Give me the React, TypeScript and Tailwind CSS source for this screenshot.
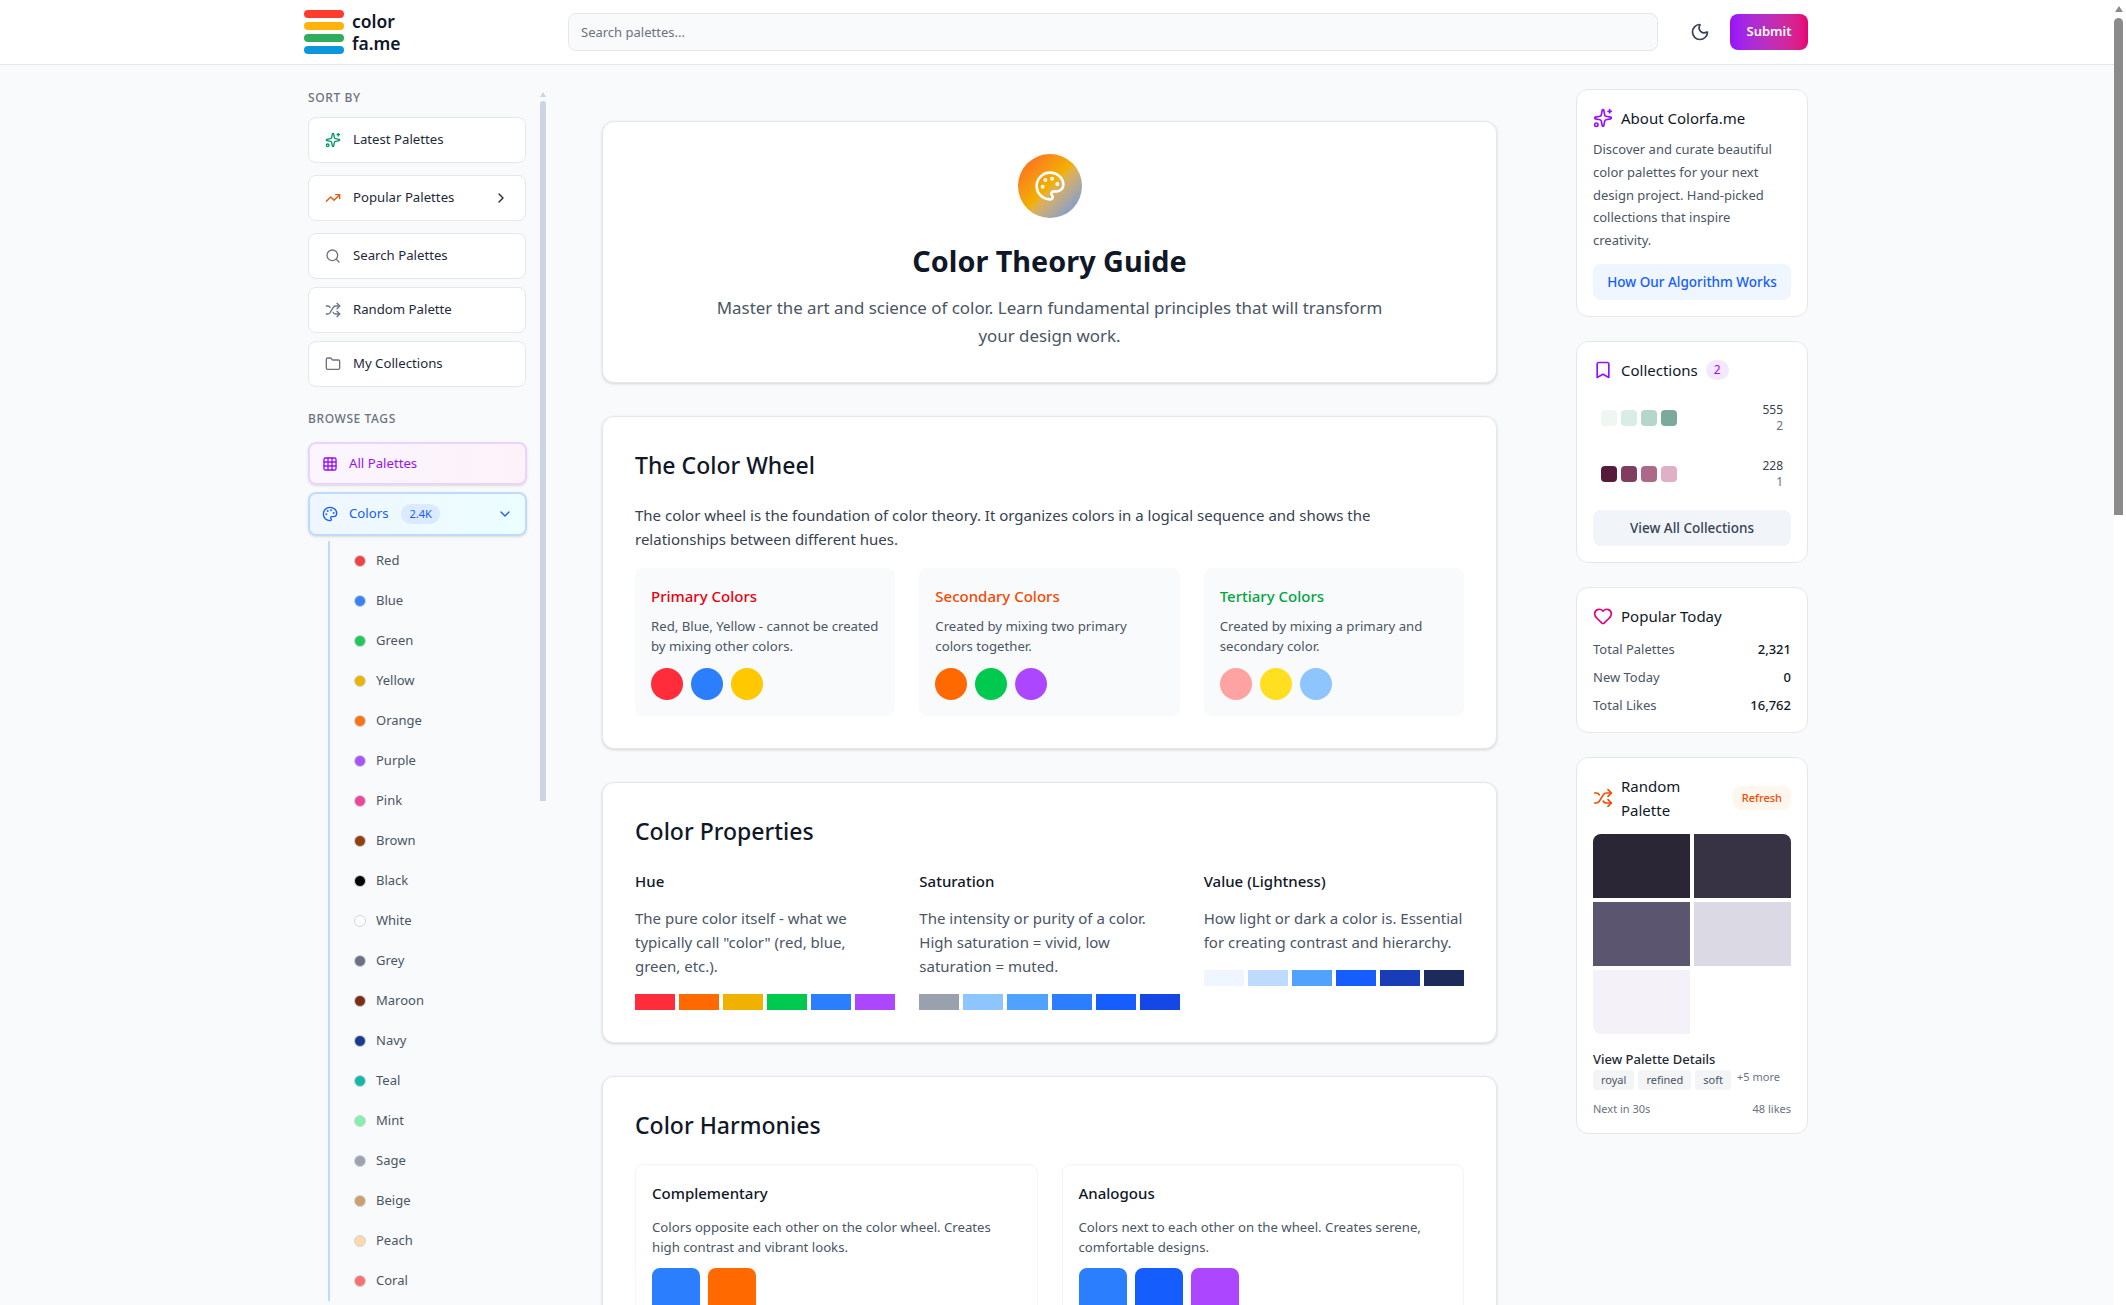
import {
  Bookmark,
  ChevronDown,
  ChevronRight,
  Folder,
  Grid3x3,
  Heart,
  Moon,
  Palette,
  Search,
  Shuffle,
  Sparkles,
  TrendingUp,
} from "lucide-react";

const TAG_COLORS = [
  { name: "Red", dot: "bg-[#ef4444]" },
  { name: "Blue", dot: "bg-[#3b82f6]" },
  { name: "Green", dot: "bg-[#22c55e]" },
  { name: "Yellow", dot: "bg-[#eab308]" },
  { name: "Orange", dot: "bg-[#f97316]" },
  { name: "Purple", dot: "bg-[#a855f7]" },
  { name: "Pink", dot: "bg-[#ec4899]" },
  { name: "Brown", dot: "bg-[#92400e]" },
  { name: "Black", dot: "bg-black" },
  { name: "White", dot: "bg-white" },
  { name: "Grey", dot: "bg-[#6b7280]" },
  { name: "Maroon", dot: "bg-[#7c2d12]" },
  { name: "Navy", dot: "bg-[#1e3a8a]" },
  { name: "Teal", dot: "bg-[#14b8a6]" },
  { name: "Mint", dot: "bg-[#86efac]" },
  { name: "Sage", dot: "bg-[#9ca3af]" },
  { name: "Beige", dot: "bg-[#c9a06f]" },
  { name: "Peach", dot: "bg-[#fed7aa]" },
  { name: "Coral", dot: "bg-[#f87171]" },
];

const WHEEL_CARDS = [
  {
    title: "Primary Colors",
    titleClass: "text-[#e7000b]",
    text: "Red, Blue, Yellow - cannot be created by mixing other colors.",
    dots: ["bg-[#ff2d3c]", "bg-[#2b7fff]", "bg-[#ffc800]"],
  },
  {
    title: "Secondary Colors",
    titleClass: "text-[#f54900]",
    text: "Created by mixing two primary colors together.",
    dots: ["bg-[#ff6900]", "bg-[#00c950]", "bg-[#ad46ff]"],
  },
  {
    title: "Tertiary Colors",
    titleClass: "text-[#00a63e]",
    text: "Created by mixing a primary and secondary color.",
    dots: ["bg-[#ffa2a2]", "bg-[#ffdf20]", "bg-[#8ec5ff]"],
  },
];

const PROPERTIES = [
  {
    title: "Hue",
    textClass: "pr-1",
    text: 'The pure color itself - what we typically call "color" (red, blue, green, etc.).',
    strip: ["bg-[#ff2d3c]", "bg-[#ff6900]", "bg-[#f0b100]", "bg-[#00c950]", "bg-[#2b7fff]", "bg-[#ad46ff]"],
  },
  {
    title: "Saturation",
    textClass: "",
    text: "The intensity or purity of a color. High saturation = vivid, low saturation = muted.",
    strip: ["bg-[#99a1af]", "bg-[#8ec5ff]", "bg-[#51a2ff]", "bg-[#2b7fff]", "bg-[#155dfc]", "bg-[#1447e6]"],
  },
  {
    title: "Value (Lightness)",
    textClass: "",
    text: "How light or dark a color is. Essential for creating contrast and hierarchy.",
    strip: ["bg-[#eff6ff]", "bg-[#bedbff]", "bg-[#51a2ff]", "bg-[#155dfc]", "bg-[#193cb8]", "bg-[#1c2a5c]"],
  },
];

const HARMONIES = [
  {
    title: "Complementary",
    text: "Colors opposite each other on the color wheel. Creates high contrast and vibrant looks.",
    swatches: ["bg-[#2b7fff]", "bg-[#ff6900]"],
  },
  {
    title: "Analogous",
    text: "Colors next to each other on the wheel. Creates serene, comfortable designs.",
    swatches: ["bg-[#2b7fff]", "bg-[#155dfc]", "bg-[#ad46ff]"],
  },
];

function SortButton({ icon, label, chevron, className }: { icon: React.ReactNode; label: string; chevron?: boolean; className: string }) {
  return (
    <button className={`flex h-[46px] w-[218px] items-center gap-3 rounded-lg border border-gray-200 bg-white pl-4 pr-4 text-[13.2px] font-[450] text-gray-800 ${className}`}>
      {icon}
      <span className="flex-1 text-left">{label}</span>
      {chevron && <ChevronRight size={16} className="text-gray-800" />}
    </button>
  );
}

function Sidebar() {
  return (
    <aside className="relative w-[256px] shrink-0 pt-[25px] pl-1">
      {/* fake scrollbar of the sticky sidebar */}
      <div className="absolute left-[236px] top-[27px] h-0 w-0 border-x-[3px] border-b-[5px] border-x-transparent border-b-[#cbd5e1]" />
      <div className="absolute left-[236px] top-[36px] h-[700px] w-[6px] rounded-t-full bg-[#cbd5e1]" />

      <h3 className="mb-[11px] text-xs font-medium leading-4 tracking-wider text-gray-500">SORT BY</h3>
      <SortButton className="mb-3" icon={<Sparkles size={16} className="text-[#059669]" />} label="Latest Palettes" />
      <SortButton className="mb-3" icon={<TrendingUp size={16} className="text-[#ea580c]" />} label="Popular Palettes" chevron />
      <SortButton className="mb-2" icon={<Search size={16} className="text-gray-500" />} label="Search Palettes" />
      <SortButton className="mb-2" icon={<Shuffle size={16} className="text-gray-500" />} label="Random Palette" />
      <SortButton className="mb-6" icon={<Folder size={16} className="text-gray-500" />} label="My Collections" />

      <h3 className="mb-[15px] text-xs font-medium leading-4 tracking-wider text-gray-500">BROWSE TAGS</h3>
      <button className="mb-[7px] flex h-[43px] w-[219px] items-center gap-[11px] rounded-lg border-2 border-[#e9d4ff] bg-gradient-to-r from-[#faf5ff] to-[#fdf2f8] pl-3 text-[13.2px] font-[450] text-[#9810fa] shadow-sm">
        <Grid3x3 size={16} />
        All Palettes
      </button>
      <button className="flex h-[44px] w-[219px] items-center gap-[11px] rounded-lg border-2 border-[#bedbff] bg-gradient-to-r from-[#eff6ff] to-[#ecfeff] pl-3 pr-3 text-[13.2px] font-[450] text-[#155dfc] shadow-sm">
        <Palette size={16} />
        Colors
        <span className="ml-0.5 rounded-full bg-[#dbeafe] px-2 text-[11px] leading-5">2.4K</span>
        <ChevronDown size={16} className="ml-auto" />
      </button>

      <ul className="ml-5 mt-[5px] border-l-2 border-[#bedbff] pl-6">
        {TAG_COLORS.map((c) => (
          <li key={c.name} className="flex h-10 items-center gap-[10px] text-[13px] text-gray-600">
            <span className={`h-3 w-3 rounded-full border border-gray-300 ${c.dot}`} />
            {c.name}
          </li>
        ))}
      </ul>
    </aside>
  );
}

function SectionCard({ title, children }: { title: string; children: React.ReactNode }) {
  return (
    <section className="rounded-xl border border-gray-200 bg-white p-8 shadow-[0_1px_3px_rgba(0,0,0,0.15)]">
      <h2 className="mb-[22px] text-[23px] font-medium leading-8 text-gray-900">{title}</h2>
      {children}
    </section>
  );
}

function GuideContent() {
  return (
    <main className="flex-1 pl-[42px] pr-[79px] pt-[56px]">
      <div className="flex flex-col gap-[33px]">
        <section className="rounded-xl border border-gray-200 bg-white p-8 text-center shadow-[0_1px_3px_rgba(0,0,0,0.15)]">
          <div className="mx-auto mb-[25px] flex h-16 w-16 items-center justify-center rounded-full bg-gradient-to-br from-[#ff5a1f] via-[#f0b100] to-[#5b8def]">
            <Palette size={32} className="text-white" />
          </div>
          <h1 className="mb-[15px] text-[28.8px] font-bold leading-9 text-gray-900">Color Theory Guide</h1>
          <p className="mx-auto max-w-2xl text-[16.9px] leading-7 text-gray-600">
            Master the art and science of color. Learn fundamental principles that will transform your design work.
          </p>
        </section>

        <SectionCard title="The Color Wheel">
          <p className="mb-[17px] text-[15px] leading-6 text-gray-700">
            The color wheel is the foundation of color theory. It organizes colors in a logical sequence and shows the relationships between different hues.
          </p>
          <div className="grid grid-cols-3 gap-6">
            {WHEEL_CARDS.map((card) => (
              <div key={card.title} className="rounded-lg bg-gray-50 p-4">
                <h3 className={`mb-2 text-[15px] font-medium leading-6 ${card.titleClass}`}>{card.title}</h3>
                <p className="mb-3 text-[13.2px] leading-5 text-gray-600">{card.text}</p>
                <div className="flex gap-2">
                  {card.dots.map((dot) => (
                    <span key={dot} className={`h-8 w-8 rounded-full ${dot}`} />
                  ))}
                </div>
              </div>
            ))}
          </div>
        </SectionCard>

        <SectionCard title="Color Properties">
          <div className="grid grid-cols-3 gap-6">
            {PROPERTIES.map((prop) => (
              <div key={prop.title}>
                <h3 className="mb-[13px] text-[15px] font-medium leading-6 text-gray-900">{prop.title}</h3>
                <p className={`mb-4 text-[15px] leading-6 text-gray-600 ${prop.textClass}`}>{prop.text}</p>
                <div className="flex gap-1">
                  {prop.strip.map((c) => (
                    <span key={c} className={`h-4 flex-1 ${c}`} />
                  ))}
                </div>
              </div>
            ))}
          </div>
        </SectionCard>

        <SectionCard title="Color Harmonies">
          <div className="grid grid-cols-2 gap-6 pt-px">
            {HARMONIES.map((h) => (
              <div key={h.title} className="rounded-lg border border-gray-100 p-4">
                <h3 className="mb-3 text-[15px] font-medium leading-6 text-gray-900">{h.title}</h3>
                <p className="mb-[11px] text-[13.2px] leading-5 text-gray-600">{h.text}</p>
                <div className="flex gap-2">
                  {h.swatches.map((s) => (
                    <span key={s} className={`h-12 w-12 rounded-lg ${s}`} />
                  ))}
                </div>
              </div>
            ))}
          </div>
        </SectionCard>
      </div>
    </main>
  );
}

function InfoCard({ children }: { children: React.ReactNode }) {
  return <div className="rounded-xl border border-gray-200 bg-white p-4">{children}</div>;
}

function RightRail() {
  return (
    <aside className="flex w-[232px] shrink-0 flex-col gap-6 pt-6">
      <InfoCard>
        <div className="mb-2 flex items-center gap-2">
          <Sparkles size={20} className="text-[#9810fa]" />
          <h3 className="text-[15px] font-[450] leading-6 text-gray-900">About Colorfa.me</h3>
        </div>
        <p className="mb-3 text-[13px] leading-[22.75px] text-gray-600">
          Discover and curate beautiful color palettes for your next design project. Hand-picked collections that inspire creativity.
        </p>
        <button className="h-9 w-full rounded-lg bg-[#eff6ff] text-[13.5px] font-medium text-[#155dfc]">How Our Algorithm Works</button>
      </InfoCard>

      <InfoCard>
        <div className="mb-3 flex items-center gap-2">
          <Bookmark size={20} className="text-[#9810fa]" />
          <h3 className="text-[15px] font-[450] leading-6 text-gray-900">Collections</h3>
          <span className="rounded-full bg-[#f3e8ff] px-2 text-xs leading-5 text-[#9810fa]">2</span>
        </div>
        <div className="mb-3 flex flex-col gap-2">
          <CollectionRow colors={["bg-[#eff7f3]", "bg-[#d8ede4]", "bg-[#b5d6cb]", "bg-[#7ba99b]"]} count="555" saved="2" />
          <CollectionRow colors={["bg-[#561a3a]", "bg-[#823c5f]", "bg-[#b0688a]", "bg-[#e0afc8]"]} count="228" saved="1" />
        </div>
        <button className="h-9 w-full rounded-lg bg-[#f1f5f9] text-[13.5px] font-medium text-gray-700">View All Collections</button>
      </InfoCard>

      <InfoCard>
        <div className="mb-3 flex items-center gap-2">
          <Heart size={20} className="text-[#e60076]" />
          <h3 className="text-[15px] font-[450] leading-6 text-gray-900">Popular Today</h3>
        </div>
        <div className="flex flex-col gap-2">
          {[
            ["Total Palettes", "2,321"],
            ["New Today", "0"],
            ["Total Likes", "16,762"],
          ].map(([label, value]) => (
            <div key={label} className="flex h-5 items-center justify-between text-[13px]">
              <span className="text-gray-600">{label}</span>
              <span className="font-medium text-gray-900">{value}</span>
            </div>
          ))}
        </div>
      </InfoCard>

      <InfoCard>
        <div className="mb-3 flex items-center gap-2">
          <Shuffle size={20} className="shrink-0 text-[#f54900]" />
          <h3 className="flex-1 text-[15px] font-[450] leading-6 text-gray-900">Random Palette</h3>
          <button className="h-6 rounded-lg bg-[#fff7ed] px-[9px] text-[11px] font-medium text-[#f54900]">Refresh</button>
        </div>
        <div className="mb-[15px] grid grid-cols-2 gap-1 overflow-hidden rounded-lg">
          <div className="h-16 bg-[#2a2636]" />
          <div className="h-16 bg-[#373244]" />
          <div className="h-16 bg-[#5c5570]" />
          <div className="h-16 bg-[#dbd9e3]" />
          <div className="h-16 bg-[#f5f1f8]" />
        </div>
        <p className="text-[13px] font-medium leading-5 text-gray-800">View Palette Details</p>
        <div className="mb-[11px] mt-px flex items-start gap-1 text-[11px]">
          {["royal", "refined", "soft"].map((tag) => (
            <span key={tag} className="rounded bg-gray-100 px-2 leading-5 text-gray-600">
              {tag}
            </span>
          ))}
          <span className="-mt-px pl-0.5 leading-4 text-gray-500">+5 more</span>
        </div>
        <div className="flex justify-between text-[11px] leading-4 text-gray-500">
          <span>Next in 30s</span>
          <span>48 likes</span>
        </div>
      </InfoCard>
    </aside>
  );
}

function CollectionRow({ colors, count, saved }: { colors: string[]; count: string; saved: string }) {
  return (
    <div className="flex items-center justify-between p-2">
      <div className="flex gap-1">
        {colors.map((c) => (
          <span key={c} className={`h-4 w-4 rounded ${c}`} />
        ))}
      </div>
      <div className="text-right text-xs leading-4">
        <div className="text-gray-700">{count}</div>
        <div className="text-gray-500">{saved}</div>
      </div>
    </div>
  );
}

export default function App() {
  return (
    <div className="flex h-screen overflow-hidden bg-white font-['Noto_Sans',sans-serif]">
      <div className="h-full min-w-0 flex-1 overflow-hidden bg-[#f9fafb]">
        <header className="h-[65px] border-b border-gray-200 bg-white pr-0.5">
          <div className="mx-auto flex h-full w-[1536px] items-center px-4">
            <div className="flex w-[264px] items-center gap-2">
              <div className="flex w-10 flex-col gap-1">
                <span className="h-2 rounded-full bg-[#ff3b30]" />
                <span className="h-2 rounded-full bg-[#ffb30a]" />
                <span className="h-2 rounded-full bg-[#2fac5c]" />
                <span className="h-2 rounded-full bg-[#0a97dc]" />
              </div>
              <div className="text-[17.5px] font-semibold leading-[22px] text-[#0f172a]">
                color
                <br />
                fa.me
              </div>
            </div>
            <input
              readOnly
              placeholder="Search palettes..."
              className="h-[38px] flex-1 rounded-lg border border-gray-200 bg-gray-50 px-3 text-[13px] placeholder:text-gray-500"
            />
            <Moon size={20} className="ml-8 text-gray-700" />
            <button className="ml-5 h-9 w-[78px] rounded-lg bg-gradient-to-r from-[#9810fa] to-[#e60076] text-[13px] font-semibold text-white">Submit</button>
          </div>
        </header>
        <div className="pr-0.5">
          <div className="mx-auto flex w-[1536px] px-4">
            <Sidebar />
            <GuideContent />
            <RightRail />
          </div>
        </div>
      </div>
      {/* page scrollbar, as in the screenshot */}
      <div className="w-3 shrink-0 bg-white">
        <div className="ml-[1px] mt-1.5 h-0 w-0 border-x-[4px] border-b-[6px] border-x-transparent border-b-[#8b8b8b]" />
        <div className="mt-1.5 h-[497px] w-[9px] rounded-t-full bg-[#8b8b8b]" />
      </div>
    </div>
  );
}
